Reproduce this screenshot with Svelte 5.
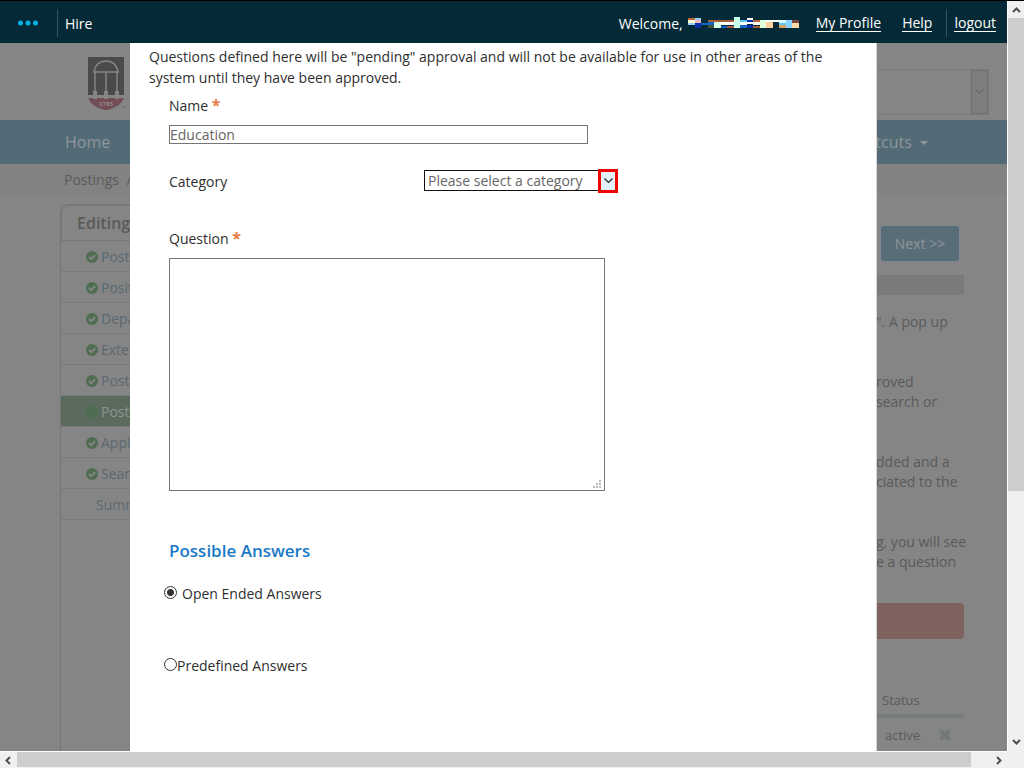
<script>
  let name = "Education";
  let category = "";
  let question = "";
  let answerType = "open";

  const steps = [
    { label: "Posting Details", done: true },
    { label: "Position Documents", done: true },
    { label: "Department", done: true },
    { label: "External Links", done: true },
    { label: "Posting Documents", done: true },
    { label: "Posting Questions", done: true, active: true },
    { label: "Applicant", done: true },
    { label: "Search", done: true },
    { label: "Summary", done: false }
  ];

  const hints = [
    ['". A pop up', "\u00a0"],
    ["roved", "search or"],
    ["dded and a", "ciated to the"],
    ["g, you will see", "e a question"]
  ];

  // x, y, width, height, colour
  const blocks = [
    [0, 2, 7, 2, "#b5683c"],
    [7, 2, 6, 2, "#8fd4f8"],
    [0, 4, 7, 3, "#fffbd6"],
    [7, 4, 6, 3, "#f0b8c0"],
    [0, 7, 7, 2, "#8fd4f8"],
    [7, 7, 6, 5, "#0a2fa8"],
    [13, 7, 7, 2, "#0f66c8"],
    [20, 4, 6, 2, "#a5603a"],
    [20, 6, 6, 3, "#0f66c8"],
    [20, 9, 6, 3, "#4a5236"],
    [26, 4, 7, 2, "#a5603a"],
    [26, 6, 7, 6, "#d8ffe8"],
    [33, 4, 13, 2, "#a5603a"],
    [33, 6, 13, 3, "#ffffff"],
    [33, 10, 6, 2, "#0a66c0"],
    [39, 10, 7, 2, "#a5603a"],
    [46, 1, 6, 11, "#c8ffe8"],
    [52, 4, 7, 2, "#5bc8f8"],
    [52, 6, 7, 3, "#ffffff"],
    [52, 9, 7, 3, "#0f66c8"],
    [59, 2, 6, 2, "#ffffff"],
    [59, 4, 6, 2, "#0a2fa8"],
    [59, 6, 6, 2, "#ffffff"],
    [59, 9, 6, 3, "#0a2fa8"],
    [65, 4, 7, 2, "#b5683c"],
    [65, 6, 7, 3, "#ffffff"],
    [65, 10, 7, 2, "#a5603a"],
    [72, 4, 6, 8, "#e0ffd8"],
    [78, 4, 7, 2, "#ffffff"],
    [78, 6, 7, 6, "#ffcf9c"],
    [85, 4, 6, 2, "#ffffff"],
    [91, 4, 7, 3, "#d8ffff"],
    [91, 7, 7, 2, "#5bc8f8"],
    [91, 9, 7, 3, "#d8a058"],
    [98, 4, 6, 8, "#88d4ff"],
    [104, 4, 7, 3, "#7a4a3c"],
    [104, 7, 7, 5, "#ffd8a8"]
  ];
</script>

<svelte:head>
  <title>Add a Question</title>
</svelte:head>

<div class="window">
  <div class="view">
    <header class="topbar">
      <button class="dots" aria-label="Modules">
        <svg width="20" height="6" viewBox="0 0 20 6">
          <circle cx="2.5" cy="3" r="2.5" />
          <circle cx="10" cy="3" r="2.5" />
          <circle cx="17.5" cy="3" r="2.5" />
        </svg>
      </button>
      <span class="module">Hire</span>
      <div class="user">
        <span>Welcome,</span>
        <svg class="masked" width="111" height="14" viewBox="0 0 111 14" shape-rendering="crispEdges">
          {#each blocks as [x, y, w, h, fill]}
            <rect {x} {y} width={w} height={h} {fill} />
          {/each}
        </svg>
        <a class="profile" href="#profile">My Profile</a>
        <a class="help" href="#help">Help</a>
        <span class="out"><a href="#logout">logout</a></span>
      </div>
    </header>

    <div class="stage">
      <div class="page">
        <div class="brand">
          <svg width="38" height="54" viewBox="0 0 38 54">
            <path d="M0 0H36V40Q33 50 18 53Q3 50 0 40Z" fill="#4a4a4a" />
            <path d="M0 39H36V40Q33 50 18 53Q3 50 0 40Z" fill="#744c55" />
            <g fill="none" stroke="#858585" stroke-width="1.5">
              <path d="M6 15Q8 4 18 4T30 15M5 15H31" />
              <path d="M7 15V38M18 15V38M29 15V38" />
              <path d="M0 39.500H36" stroke-width="3" />
              <path d="M7 34V42M18 34V42M29 34V42" stroke-width="4" />
            </g>
            <text x="18" y="49" text-anchor="middle">1785</text>
            <path d="M35 50H38" stroke="#666" />
          </svg>
          <div class="picker">
            <span class="picker-arrow">
              <svg width="9" height="6" viewBox="0 0 9 6"><path d="M.5 .5L4.500 4.500L8.500 .5" /></svg>
            </span>
          </div>
        </div>
        <nav class="menu">
          <a href="#home">Home</a>
          <a href="#shortcuts">Shortcuts <i class="caret"></i></a>
        </nav>
        <div class="crumbs"><a href="#postings">Postings</a> <span>/</span></div>

        <div class="body">
          <aside>
            <h2>Editing Posting</h2>
            <ul>
              {#each steps as step}
                <li class:active={step.active} class:last={!step.done}>
                  {#if step.done}
                    <svg width="12" height="12" viewBox="0 0 12 12">
                      <circle cx="6" cy="6" r="6" />
                      {#if !step.active}
                        <path d="M3 6L5.200 8.200L9.200 4.200" />
                      {/if}
                    </svg>
                  {/if}
                  <a href="#step">{step.label}</a>
                </li>
              {/each}
            </ul>
          </aside>
          <section class="detail">
            <button class="next">Next &gt;&gt;</button>
            <div class="strip"></div>
            {#each hints as lines}
              <p>
                {#each lines as line}
                  <span>{line}</span>
                {/each}
              </p>
            {/each}
            <div class="alert"></div>
            <table>
              <thead>
                <tr><th>Status</th><th></th></tr>
              </thead>
              <tbody>
                <tr>
                  <td>active</td>
                  <td>
                    <button class="remove" aria-label="Remove">
                      <svg width="12" height="12" viewBox="0 0 12 12"><path d="M1.500 1.500L10.500 10.500M10.500 1.500L1.500 10.500" /></svg>
                    </button>
                  </td>
                </tr>
              </tbody>
            </table>
          </section>
        </div>
      </div>

      <form class="dialog" on:submit|preventDefault>
        <p class="intro">
          Questions defined here will be "pending" approval and will not be available for use in other areas of the
          system until they have been approved.
        </p>
        <div class="fields">
          <label for="name">Name <b>*</b></label>
          <input id="name" type="text" bind:value={name} />
          <div class="category">
            <label for="category">Category</label>
            <div class="select">
              <select id="category" bind:value={category}>
                <option value="">Please select a category</option>
              </select>
              <span class="marker">
                <svg width="9" height="6" viewBox="0 0 9 6"><path d="M.5 .5L4.500 4.500L8.500 .5" /></svg>
              </span>
            </div>
          </div>
          <label for="question">Question <b>*</b></label>
          <div class="area">
            <textarea id="question" bind:value={question}></textarea>
            <svg class="grip" width="8" height="8" viewBox="0 0 8 8" shape-rendering="crispEdges">
              <path d="M6 0h2v2h-2zM3 3h2v2h-2zM6 3h2v2h-2zM0 6h2v2h-2zM3 6h2v2h-2zM6 6h2v2h-2z" />
            </svg>
          </div>
          <h3>Possible Answers</h3>
        </div>
        <div class="answers">
          <label class="spaced"><input type="radio" value="open" bind:group={answerType} />Open Ended Answers</label>
          <label><input type="radio" value="predefined" bind:group={answerType} />Predefined Answers</label>
        </div>
      </form>
    </div>
  </div>

  <div class="vbar">
    <svg width="9" height="6" viewBox="0 0 9 6"><path d="M1 5L4.500 1.500L8 5" /></svg>
    <div class="track"><div class="thumb"></div></div>
    <svg width="9" height="6" viewBox="0 0 9 6"><path d="M1 1L4.500 4.500L8 1" /></svg>
  </div>
  <div class="hbar">
    <svg width="6" height="9" viewBox="0 0 6 9"><path d="M5 1L1.500 4.500L5 8" /></svg>
    <div class="track"><div class="thumb"></div></div>
    <svg width="6" height="9" viewBox="0 0 6 9"><path d="M1 1L4.500 4.500L1 8" /></svg>
  </div>
  <div class="corner"></div>
</div>

<style>
  :global(body) {
    margin: 0;
    overflow: hidden;
  }

  .window {
    display: grid;
    grid-template: minmax(0, 1fr) 17px / minmax(0, 1fr) 17px;
    height: 100vh;
    box-sizing: border-box;
    border-top: 1px solid #000;
    font-family: "Open Sans", "Noto Sans", sans-serif;
    font-size: 14px;
  }

  .window * {
    box-sizing: border-box;
  }

  button {
    font: inherit;
    border: none;
    padding: 0;
    background: none;
  }

  a {
    color: inherit;
    text-decoration: none;
  }

  .view {
    display: flex;
    flex-direction: column;
    min-height: 0;
  }

  .topbar {
    display: flex;
    align-items: center;
    flex: none;
    height: 42px;
    padding: 2px 11px 0 18px;
    background: #032a36;
    color: #fff;
  }

  .dots {
    display: flex;
    width: 39px;
    height: 28px;
    align-items: center;
    border-right: 1px solid #35555e;
    box-sizing: content-box;
  }

  .dots svg {
    fill: #00b5e6;
  }

  .module {
    padding-left: 7px;
  }

  .user {
    display: flex;
    align-items: center;
    margin-left: auto;
  }

  .user a {
    line-height: 17px;
    border-bottom: 1px solid #fff;
  }

  .masked {
    margin-left: 5px;
  }

  .profile {
    margin-left: 17px;
  }

  .help {
    margin: 0 14px 0 21px;
  }

  .out {
    display: flex;
    align-items: center;
    height: 28px;
    padding-left: 7px;
    border-left: 1px solid #35555e;
  }

  .stage {
    position: relative;
    flex: 1;
    min-height: 0;
    overflow: hidden;
    background: #858585;
  }

  .page {
    display: flex;
    flex-direction: column;
    height: 100%;
    color: #5a5a5a;
  }

  .brand {
    display: flex;
    justify-content: space-between;
    flex: none;
    height: 77px;
    padding: 14px 18px 6px 88px;
  }

  .brand text {
    font: bold 7px "Liberation Serif", serif;
    fill: #929292;
  }

  .picker {
    display: flex;
    justify-content: flex-end;
    width: 300px;
    height: 46px;
    margin-top: 12px;
    border: 1px solid #7b7b7b;
  }

  .picker-arrow {
    display: grid;
    place-items: center;
    width: 17px;
    border: 1px solid #6f6f6f;
    background: #7e7e7e;
  }

  .picker-arrow path {
    fill: none;
    stroke: #5e5e5e;
  }

  .menu {
    display: flex;
    justify-content: space-between;
    align-items: center;
    flex: none;
    height: 44px;
    padding: 0 79px 0 65px;
    background: #526b77;
    color: #8f9598;
    font-size: 16px;
  }

  .caret {
    display: inline-block;
    margin: 0 0 2px 4px;
    border: 4px solid transparent;
    border-top-color: #8f9598;
    border-bottom: none;
    vertical-align: middle;
  }

  .crumbs {
    flex: none;
    height: 30px;
    padding: 0 64px;
    background: #828282;
    line-height: 32px;
  }

  .crumbs span {
    margin-left: 4px;
  }

  .body {
    display: flex;
    justify-content: space-between;
    flex: 1;
    min-height: 0;
    padding: 10px 43px 0 60px;
  }

  aside {
    width: 200px;
    border: 1px solid #777;
    border-bottom: none;
    border-radius: 8px 0 0 0;
  }

  h2 {
    height: 36px;
    margin: 0;
    padding-left: 15px;
    border: 1px solid #777;
    border-radius: 8px 0 0 0;
    font-size: 16px;
    font-weight: 600;
    line-height: 34px;
  }

  ul {
    margin: 0;
    padding: 0;
    list-style: none;
  }

  li {
    display: flex;
    align-items: center;
    gap: 3px;
    height: 31px;
    padding: 1px 0 0 25px;
    border-bottom: 1px solid #7a7a7a;
    color: #5b6871;
    white-space: nowrap;
  }

  li.last {
    padding-left: 35px;
  }

  li.active {
    background: #5a6b5e;
    color: #8f9590;
  }

  li circle {
    fill: #4f6d51;
  }

  li path {
    fill: none;
    stroke: #858585;
    stroke-width: 2;
  }

  .detail {
    width: 88px;
    padding-top: 22px;
    white-space: nowrap;
  }

  .next {
    display: block;
    width: 78px;
    height: 35px;
    margin: 0 5px 14px;
    border-radius: 3px;
    background: #596d79;
    color: #8f9598;
    box-shadow: 0 0 2px #7290a0;
  }

  .strip {
    height: 20px;
    margin-bottom: 17px;
    background: #7a7a7a;
  }

  .detail p {
    margin: 0 0 40px;
    line-height: 20px;
  }

  .detail p span {
    display: block;
  }

  .detail p:last-of-type {
    margin-bottom: 31px;
  }

  .detail p:first-of-type {
    margin-bottom: 20px;
  }

  .alert {
    height: 36px;
    margin-bottom: 46px;
    border-radius: 0 4px 4px 0;
    background: #7e625d;
  }

  table {
    width: 100%;
    border-collapse: collapse;
    font-size: 13px;
  }

  th {
    height: 31px;
    padding: 0 0 0 6px;
    border-bottom: 4px solid #777c7d;
    font-weight: normal;
    text-align: left;
  }

  td {
    height: 35px;
    padding: 0 0 0 9px;
  }

  td + td {
    padding-left: 12px;
  }

  .remove {
    display: flex;
    width: 20px;
  }

  .remove path {
    stroke: #737a79;
    stroke-width: 4;
  }

  .dialog {
    position: absolute;
    inset: 0;
    width: 747px;
    max-width: 100%;
    margin: 0 auto;
    padding: 3px 19px 0;
    border: solid #d5d5d5;
    border-width: 0 1px 0 0;
    background: #fff;
    color: #2f2f2f;
    line-height: 21px;
    overflow: hidden;
  }

  .intro {
    margin: 0 0 7px;
  }

  .fields {
    display: flex;
    flex-direction: column;
    padding-left: 20px;
  }

  label b {
    color: #ea7a45;
    font-size: 16px;
    line-height: 16px;
  }

  .fields input,
  select,
  textarea {
    border: 1px solid #767676;
    border-radius: 0;
    background: #fff;
    color: #666;
    font: inherit;
    outline: none;
  }

  .fields input {
    width: 419px;
    height: 19px;
    margin: 9px 0 25px;
    padding: 0;
  }

  .category {
    display: flex;
    align-items: flex-start;
    height: 24px;
    margin-bottom: 35px;
  }

  .category label {
    width: 255px;
    line-height: 25px;
  }

  .select {
    position: relative;
    width: 194px;
    margin-top: 1px;
  }

  select {
    display: block;
    width: 100%;
    height: 21px;
    padding: 0 3px;
    border-color: #111;
    appearance: none;
    line-height: 19px;
  }

  .marker {
    position: absolute;
    top: -1px;
    right: 0;
    display: grid;
    place-items: center;
    width: 20px;
    height: 24px;
    border: 3px solid #f00000;
    background: #e3f0fa;
    pointer-events: none;
  }

  .marker path {
    fill: none;
    stroke: #222;
    stroke-width: 1.2;
  }

  .area {
    position: relative;
    width: 436px;
    margin: 9px 0 49px;
  }

  textarea {
    display: block;
    width: 100%;
    height: 233px;
    resize: none;
  }

  .grip {
    position: absolute;
    right: 4px;
    bottom: 3px;
    fill: #bdbdbd;
  }

  h3 {
    margin: 0 0 22px;
    color: #1b79c7;
    font-size: 17px;
    font-weight: 600;
    line-height: 21px;
  }

  .answers {
    display: flex;
    flex-direction: column;
    gap: 51px;
    padding-left: 15px;
  }

  .answers label {
    display: flex;
    align-items: center;
  }

  .answers input {
    width: 13px;
    height: 13px;
    margin: 0 0 2px;
    border: 1px solid #333;
    border-radius: 50%;
    appearance: none;
  }

  .answers input:checked {
    background: radial-gradient(circle, #333 3px, #fff 4px);
  }

  .spaced {
    gap: 5px;
  }

  .vbar,
  .hbar {
    display: flex;
    align-items: center;
    background: #f0f0f0;
  }

  .vbar {
    flex-direction: column;
    border-left: 1px solid #fff;
    padding: 6px 0;
    gap: 5px;
  }

  .hbar {
    border-top: 1px solid #fff;
    padding: 0 5px 0 5px;
    gap: 6px;
  }

  .vbar path,
  .hbar path {
    fill: none;
    stroke: #505050;
    stroke-width: 2;
  }

  .track {
    flex: 1;
    align-self: stretch;
  }

  .thumb {
    background: #cdcdcd;
  }

  .vbar .thumb {
    height: 66%;
  }

  .hbar .thumb {
    width: 98%;
    height: 15px;
  }

  .corner {
    background: #f0f0f0;
  }
</style>
